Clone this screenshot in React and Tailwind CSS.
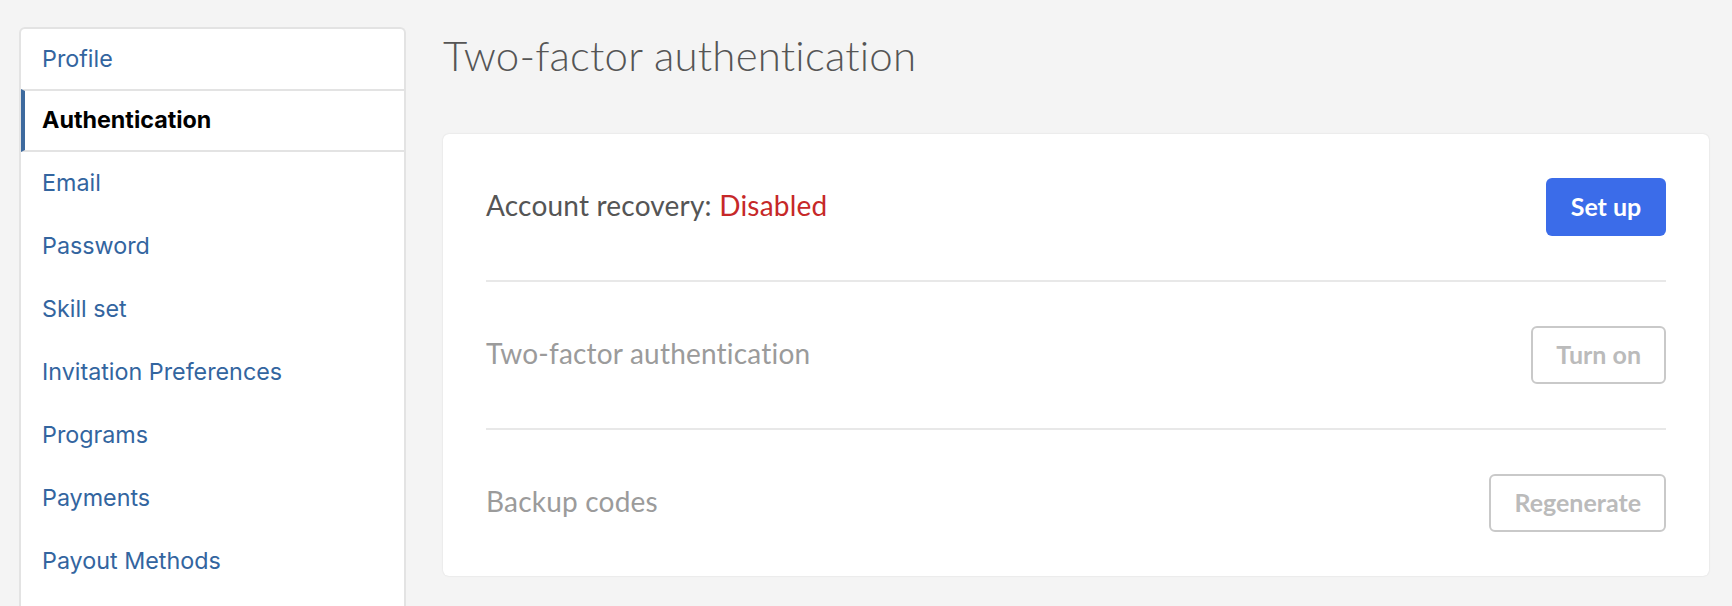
import React from 'react';

const navItems = [
  'Profile',
  'Authentication',
  'Email',
  'Password',
  'Skill set',
  'Invitation Preferences',
  'Programs',
  'Payments',
  'Payout Methods',
];

const Row = ({ label, button, last }) => (
  <div className={`flex items-center justify-between py-[44px] ${last ? '' : 'border-b-2 border-[#e8e8e8]'}`}>
    <div className="-mt-[4px]">{label}</div>
    {button}
  </div>
);

const OutlineButton = ({ children }) => (
  <button className="h-[58px] rounded-[6px] border-2 border-[#c9c9c9] bg-white px-[23px] text-[25px] font-bold text-[#bbbbbb]">
    {children}
  </button>
);

export default function App() {
  return (
    <div className="min-h-[606px] bg-[#f4f4f4] flex items-start gap-[37px] pl-[19px] pr-[23px] pt-[27px] font-['Lato',sans-serif]">
      {/* Sidebar */}
      <nav className="w-[387px] shrink-0 h-[600px] rounded-t-[6px] border-2 border-b-0 border-[#e3e3e3] bg-white font-['Inter',sans-serif]">
        {navItems.map((item) => {
          const active = item === 'Authentication';
          return (
            <a
              key={item}
              href="#"
              className={`flex items-center border-l-4 pl-[17px] text-[23.3px] ${
                active
                  ? 'h-[63px] border-y-2 border-y-[#e3e3e3] border-l-[#3d6a9e] font-bold text-black'
                  : item === 'Profile'
                  ? 'h-[60px] border-l-transparent text-[#33659f]'
                  : 'h-[63px] border-l-transparent text-[#33659f]'
              }`}
            >
              {item}
            </a>
          );
        })}
      </nav>

      {/* Main */}
      <main className="flex-1 min-w-0">
        <h1 className="text-[42px] font-light leading-[56px] text-[#555555] tracking-[0.2px]">Two-factor authentication</h1>
        <div className="mt-[51px] rounded-[6px] bg-white px-[43px] shadow-[0_0_2px_rgba(0,0,0,0.12)]">
          <Row
            label={
              <span className="text-[28px] tracking-[0.2px] text-[#555555]">
                Account recovery: <span className="text-[#c62828]">Disabled</span>
              </span>
            }
            button={
              <button className="h-[58px] w-[120px] rounded-[6px] bg-[#3b6ce9] text-[25px] font-bold text-white">
                Set up
              </button>
            }
          />
          <Row
            label={<span className="text-[28px] tracking-[0.2px] text-[#9b9b9b]">Two-factor authentication</span>}
            button={<OutlineButton>Turn on</OutlineButton>}
          />
          <Row
            last
            label={<span className="text-[28px] tracking-[0.2px] text-[#9b9b9b]">Backup codes</span>}
            button={<OutlineButton>Regenerate</OutlineButton>}
          />
        </div>
      </main>
    </div>
  );
}
